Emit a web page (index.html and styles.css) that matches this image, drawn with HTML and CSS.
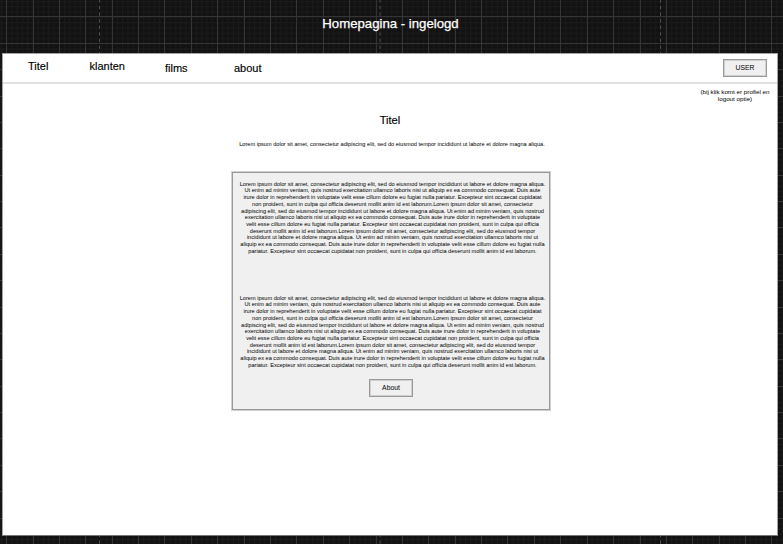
FILE: index.html
```
<!DOCTYPE html>
<html lang="nl">
<head>
<meta charset="utf-8">
<title>Homepagina - ingelogd</title>
<link rel="stylesheet" href="styles.css">
</head>
<body>
<svg class="grid" width="783" height="544" aria-hidden="true">
  <defs>
    <pattern id="minor" width="5.276" height="5.276" x="6" y="0.9" patternUnits="userSpaceOnUse">
      <path d="M.5 0V5.276M0 .5H5.276" stroke="#1a1a1a" fill="none"/>
    </pattern>
  </defs>
  <rect width="783" height="544" fill="url(#minor)"/>
  <path class="major" d="M6.5 0v544M33.5 0v544M59.5 0v544M85.5 0v544M112.5 0v544M138.5 0v544M164.5 0v544M191.5 0v544M217.5 0v544M244.5 0v544M270.5 0v544M296.5 0v544M323.5 0v544M349.5 0v544M376.5 0v544M402.5 0v544M428.5 0v544M455.5 0v544M481.5 0v544M507.5 0v544M534.5 0v544M560.5 0v544M587.5 0v544M613.5 0v544M640.5 0v544M666.5 0v544M692.5 0v544M719.5 0v544M745.5 0v544M771.5 0v544"/>
  <path class="major" d="M0 16.5h783M0 43.5h783M0 69.5h783M0 96.5h783M0 122.5h783M0 148.5h783M0 175.5h783M0 201.5h783M0 227.5h783M0 254.5h783M0 280.5h783M0 307.5h783M0 333.5h783M0 359.5h783M0 386.5h783M0 412.5h783M0 438.5h783M0 465.5h783M0 491.5h783M0 518.5h783"/>
  <path class="pagebreak" d="M99.5 -.7V544M380 -.7V544M660.5 -.7V544"/>
</svg>
<h1 class="heading">Homepagina - ingelogd</h1>
<div class="page">
  <header class="bar">
    <nav class="nav"><a>Titel</a><a>klanten</a><a class="low">films</a><a class="low">about</a></nav>
    <button class="btn user">USER</button>
  </header>
  <p class="note">(bij klik komt er profiel en<br>logout optie)</p>
  <main class="main">
    <h2 class="title">Titel</h2>
    <p class="lorem">Lorem ipsum dolor sit amet, consectetur adipiscing elit, sed do eiusmod tempor incididunt ut labore et dolore magna aliqua.</p>
    <section class="card">
      <p class="lorem">Lorem ipsum dolor sit amet, consectetur adipiscing elit, sed do eiusmod tempor incididunt ut labore et dolore magna aliqua.<br>Ut enim ad minim veniam, quis nostrud exercitation ullamco laboris nisi ut aliquip ex ea commodo consequat. Duis aute<br>irure dolor in reprehenderit in voluptate velit esse cillum dolore eu fugiat nulla pariatur. Excepteur sint occaecat cupidatat<br>non proident, sunt in culpa qui officia deserunt mollit anim id est laborum.Lorem ipsum dolor sit amet, consectetur<br>adipiscing elit, sed do eiusmod tempor incididunt ut labore et dolore magna aliqua. Ut enim ad minim veniam, quis nostrud<br>exercitation ullamco laboris nisi ut aliquip ex ea commodo consequat. Duis aute irure dolor in reprehenderit in voluptate<br>velit esse cillum dolore eu fugiat nulla pariatur. Excepteur sint occaecat cupidatat non proident, sunt in culpa qui officia<br>deserunt mollit anim id est laborum.Lorem ipsum dolor sit amet, consectetur adipiscing elit, sed do eiusmod tempor<br>incididunt ut labore et dolore magna aliqua. Ut enim ad minim veniam, quis nostrud exercitation ullamco laboris nisi ut<br>aliquip ex ea commodo consequat. Duis aute irure dolor in reprehenderit in voluptate velit esse cillum dolore eu fugiat nulla<br>pariatur. Excepteur sint occaecat cupidatat non proident, sunt in culpa qui officia deserunt mollit anim id est laborum.</p>
      <p class="lorem second">Lorem ipsum dolor sit amet, consectetur adipiscing elit, sed do eiusmod tempor incididunt ut labore et dolore magna aliqua.<br>Ut enim ad minim veniam, quis nostrud exercitation ullamco laboris nisi ut aliquip ex ea commodo consequat. Duis aute<br>irure dolor in reprehenderit in voluptate velit esse cillum dolore eu fugiat nulla pariatur. Excepteur sint occaecat cupidatat<br>non proident, sunt in culpa qui officia deserunt mollit anim id est laborum.Lorem ipsum dolor sit amet, consectetur<br>adipiscing elit, sed do eiusmod tempor incididunt ut labore et dolore magna aliqua. Ut enim ad minim veniam, quis nostrud<br>exercitation ullamco laboris nisi ut aliquip ex ea commodo consequat. Duis aute irure dolor in reprehenderit in voluptate<br>velit esse cillum dolore eu fugiat nulla pariatur. Excepteur sint occaecat cupidatat non proident, sunt in culpa qui officia<br>deserunt mollit anim id est laborum.Lorem ipsum dolor sit amet, consectetur adipiscing elit, sed do eiusmod tempor<br>incididunt ut labore et dolore magna aliqua. Ut enim ad minim veniam, quis nostrud exercitation ullamco laboris nisi ut<br>aliquip ex ea commodo consequat. Duis aute irure dolor in reprehenderit in voluptate velit esse cillum dolore eu fugiat nulla<br>pariatur. Excepteur sint occaecat cupidatat non proident, sunt in culpa qui officia deserunt mollit anim id est laborum.</p>
      <button class="btn about">About</button>
    </section>
  </main>
</div>
</body>
</html>
```
FILE: styles.css
```
* { box-sizing: border-box; }
html, body { margin: 0; height: 544px; overflow: hidden; }
body {
  background: #121212;
  font-family: "Liberation Sans", Arial, sans-serif;
  color: #000;
  display: flow-root;
}
h1, h2, p { margin: 0; font-weight: 400; }
.grid { position: absolute; left: 0; top: 0; z-index: -1; }
.major { stroke: #353535; fill: none; }
.pagebreak { stroke: #505050; stroke-dasharray: 3.3 3.3; fill: none; }
.heading {
  margin-top: 15px;
  height: 38px;
  padding-right: 2px;
  text-align: center;
  font-size: 13.2px;
  line-height: 17px;
  color: #fff;
  -webkit-text-stroke: 0.25px #fff;
}
.page {
  width: 776px;
  height: 483px;
  margin-left: 2px;
  background: #fff;
  border: 1px solid #a3a3a3;
  border-bottom-color: #777;
}
.bar {
  height: 30px;
  display: flex;
  justify-content: space-between;
  align-items: flex-start;
  border-bottom: 2px solid #e0e0e0;
  padding: 5px 10px 0 25px;
}
.nav {
  display: flex;
  font-size: 11px;
  line-height: 14px;
  -webkit-text-stroke: 0.15px #000;
}
.nav a:nth-child(1) { width: 61.5px; }
.nav a:nth-child(2) { width: 75.5px; }
.nav a:nth-child(3) { width: 69px; }
.nav .low { padding-top: 2px; }
.btn {
  width: 44px;
  height: 18px;
  padding: 0;
  font: 6.8px/10px "Liberation Sans", Arial, sans-serif;
  color: #000;
  background: #f0f0f0;
  border: 1px solid #999;
  box-shadow: inset 0 0 0 1px #d0d0d0;
}
.note {
  width: 90px;
  height: 20px;
  margin: 4px 0 0 687px;
  text-align: center;
  font-size: 6.25px;
  line-height: 7px;
  white-space: nowrap;
}
.main { display: flex; flex-direction: column; align-items: center; }
.title {
  margin: 4px 0 0;
  font-size: 11px;
  line-height: 16px;
  -webkit-text-stroke: 0.15px #000;
}
.main > .lorem { margin-top: 13px; padding-left: 4px; }
.lorem {
  font-size: 5.62px;
  line-height: 6.72px;
  text-align: center;
  white-space: nowrap;
}
.card {
  width: 318px;
  height: 238px;
  margin: 24px 0 0 2px;
  padding: 8px 0 0 3px;
  display: flex;
  flex-direction: column;
  align-items: center;
  background: #f0f0f0;
  border: 1px solid #999;
  box-shadow: 0 0 0 1px #d0d0d0;
}
.second { margin-top: 40px; }
.about { margin: 10px 3px 0 0; }
```
